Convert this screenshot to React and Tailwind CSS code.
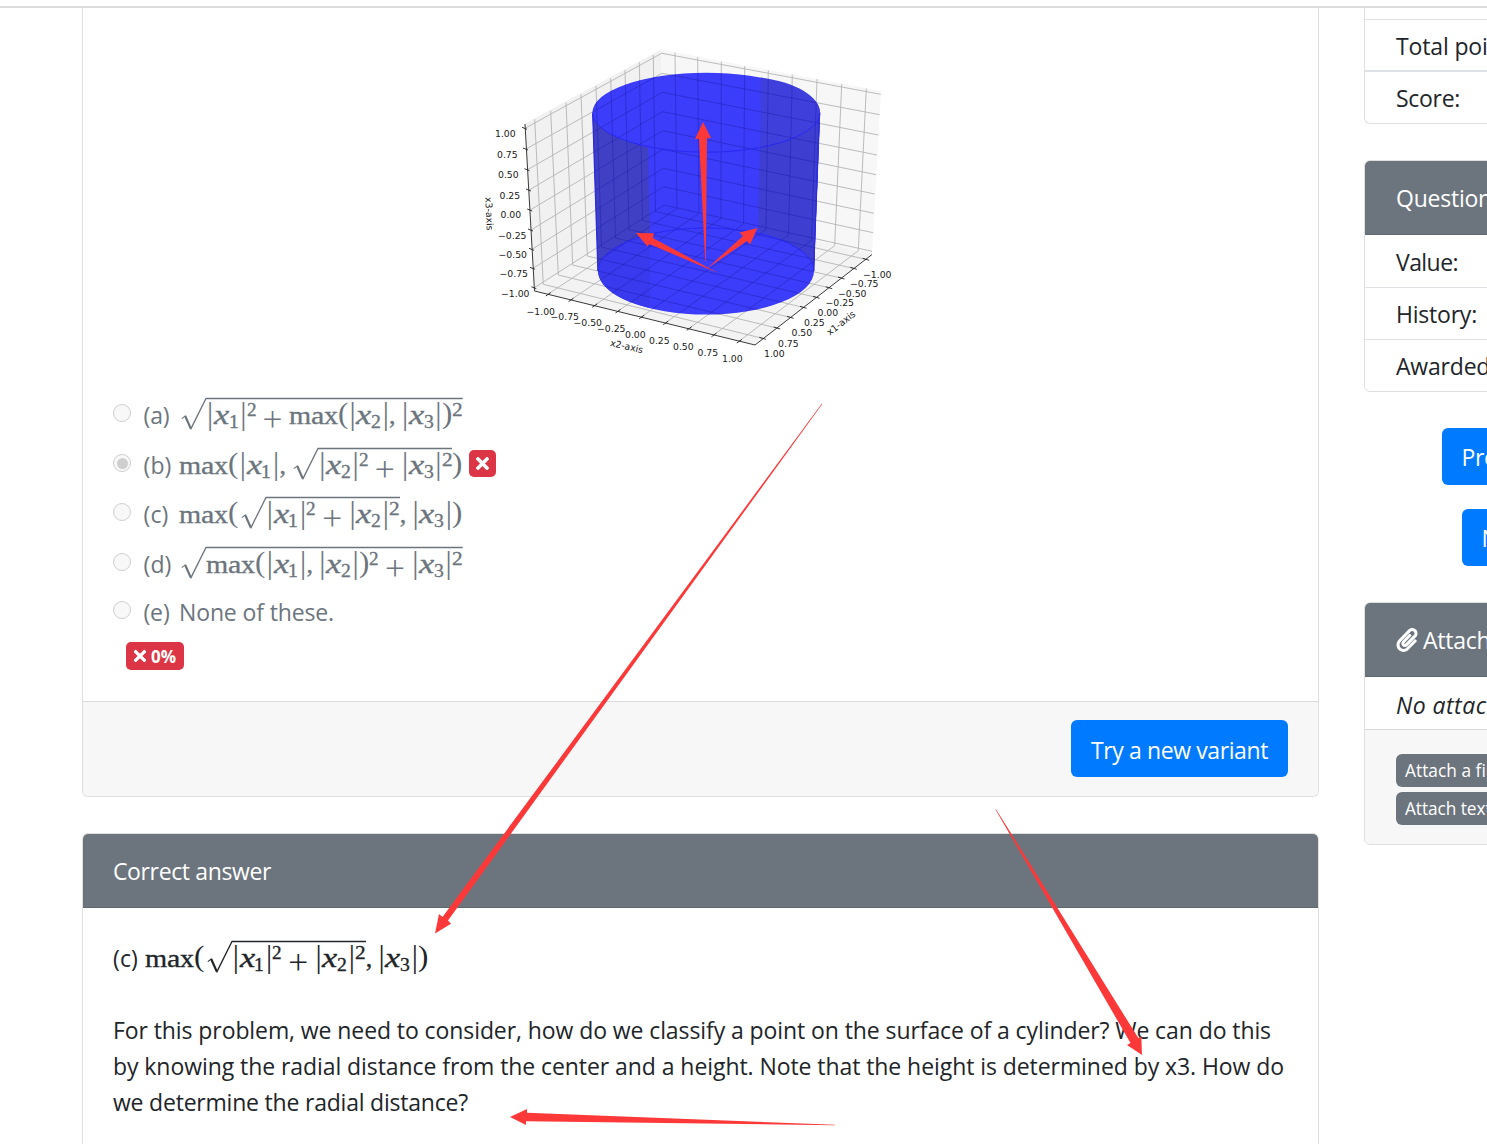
import React, { useLayoutEffect, useRef } from "react";
import { FaPaperclip, FaTimes } from "react-icons/fa";

// Text tracked so that it fills exactly `w` pixels.
function Fit({ w, children, className = "" }) {
  const ref = useRef(null);
  useLayoutEffect(() => {
    const el = ref.current;
    el.style.letterSpacing = "0px";
    const natural = el.getBoundingClientRect().width;
    el.style.letterSpacing = (w - natural) / children.length + "px";
  }, [w, children]);
  return (
    <span ref={ref} className={"inline-block whitespace-nowrap " + className}>
      {children}
    </span>
  );
}

/* ---------- formulas ---------- */

const EM = 26.6;
// kind: [advance in em, natural advance of the glyph in its font, font px, classes]
const BOLDER = "[-webkit-text-stroke:0.35px_currentColor]";
const GLYPHS = {
  m: [0.833, 0.778, 26, BOLDER],
  a: [0.5, 0.444, 26, BOLDER],
  x: [0.528, 0.5, 26, BOLDER],
  "(": [0.389, 0.333, 29, "-top-px"],
  ")": [0.389, 0.333, 29, "-top-px"],
  "|": [0.278, 0.2, 31, "left-px"],
  ",": [0.445, 0.25, 26, BOLDER],
};

function Glyph({ t, adv, nat, size, cls, stretch = true }) {
  const w = adv * EM;
  return (
    <span className={"relative inline-block leading-none " + cls} style={{ width: w, fontSize: size }}>
      <span
        className="inline-block origin-left"
        style={{ transform: stretch ? `scaleX(${w / (nat * size)})` : undefined }}
      >
        {t}
      </span>
    </span>
  );
}

function widthOf(tokens) {
  return tokens.reduce((sum, t) => {
    if (t === "X") return sum + 0.572;
    if (t[0] === "_") return sum + 0.4;
    if (t[0] === "^") return sum + (t[2] ? 0.4 : 0.36);
    if (t === "+") return sum + 1.222;
    return sum + GLYPHS[t][0];
  }, 0) * EM;
}

function Tokens({ list }) {
  return list.map((t, i) => {
    if (t === "X") return <Glyph key={i} t="x" adv={0.572} nat={0.444} size={27} cls={"italic left-[0.5px] " + BOLDER} />;
    if (t[0] === "_")
      return <Glyph key={i} t={t[1]} adv={0.4} nat={0.54} size={19} cls={"top-[4px] " + BOLDER} />;
    if (t[0] === "^")
      return <Glyph key={i} t={t[1]} adv={t[2] ? 0.4 : 0.36} nat={0.5} size={19} cls={"-top-[8px] " + BOLDER} />;
    if (t === "+")
      return (
        <span
          key={i}
          className="relative top-[5.5px] flex justify-center font-['Inter'] text-[38px] font-extralight leading-[20px]"
          style={{ width: 1.222 * EM }}
        >
          +
        </span>
      );
    const [adv, nat, size, cls] = GLYPHS[t];
    return <Glyph key={i} t={t} adv={adv} nat={nat} size={size} cls={cls} stretch={t !== "," && t !== "|"} />;
  });
}

function Sqrt({ list }) {
  const end = 27 + widthOf(list);
  return (
    <span className="inline-flex items-baseline">
      <svg width="27" height="26" className="shrink-0 overflow-visible" fill="none" stroke="currentColor">
        <path d="M2.8 20.6L6.6 17.6" strokeWidth="1.1" />
        <path d="M6.2 18L11.8 30.6" strokeWidth="2.2" />
        <path d={`M11.6 31.4L27 0.5H${end}`} strokeWidth="1.3" />
      </svg>
      <Tokens list={list} />
    </span>
  );
}

const ABS = (n) => ["|", "X", "_" + n, "|"];
const MAX = ["m", "a", "x", "("];

function Formula({ parts }) {
  return (
    <span className="inline-flex items-baseline font-['Liberation_Serif',serif]">
      {parts.map((p, i) => (p.sqrt ? <Sqrt key={i} list={p.sqrt} /> : <Tokens key={i} list={p} />))}
    </span>
  );
}

const F_A = [{ sqrt: [...ABS(1), "^2", "+", ...MAX, ...ABS(2), ",", ...ABS(3), ")", "^2e"] }];
const F_B = [[...MAX, ...ABS(1), ","], { sqrt: [...ABS(2), "^2", "+", ...ABS(3), "^2e"] }, [")"]];
const F_C = [[...MAX], { sqrt: [...ABS(1), "^2", "+", ...ABS(2), "^2e"] }, [",", ...ABS(3), ")"]];
const F_D = [{ sqrt: [...MAX, ...ABS(1), ",", ...ABS(2), ")", "^2", "+", ...ABS(3), "^2e"] }];

function Option({ label, lw, checked, h, children }) {
  return (
    <div className={"flex items-start " + h}>
      <span className="ml-[30px] mt-[7px] flex size-[18px] items-center justify-center rounded-full border-[1.5px] border-[#cfcfcf] bg-[#f8f8f8]">
        {checked && <span className="size-[11px] rounded-full bg-[#cfcfcf]" />}
      </span>
      <div className="ml-[12.5px] flex items-baseline text-[23px] leading-[36px] text-[#6c757d]">
        <span className="w-[35.5px]">
          <Fit w={lw}>{label}</Fit>
        </span>
        {children}
      </div>
    </div>
  );
}

/* ---------- 3D plot ---------- */

const Z_LEFT = [[525, 128.3], [526, 149], [527.5, 169.7], [529, 190], [530.2, 210], [531, 230], [532, 249.3], [533, 268.3], [534.3, 287.7]];
const Z_BACK = [[661.7, 53.3], [662, 73.3], [662.2, 92.3], [662.5, 111.7], [662.8, 130.7], [663, 149.3], [663.3, 168.3], [663.6, 186.7], [664, 205]];
const Z_RIGHT = [[880.7, 94.3], [879.7, 114.7], [878.3, 135], [877, 155], [876, 174.7], [874.7, 194], [874, 213.3], [873, 232.7], [872, 251.3]];
const L_TOP = [[534.7, 119.3], [550.7, 110.7], [566, 102.3], [581, 94.3], [596, 86], [610.7, 78.3], [625, 70], [639.3, 62.3], [653.3, 55]];
const L_BOT = [[543.3, 284.3], [558.3, 275], [572.7, 265], [587.3, 256], [601.5, 247], [615.5, 238], [629, 229.5], [642.5, 220.5], [655.5, 211.5]];
const R_TOP = [[675, 52.7], [697.7, 57.3], [721.3, 61.7], [744.7, 66], [768.3, 70.3], [792.3, 74.7], [817, 79], [841.7, 84], [866.3, 88.7]];
const R_BOT = [[677, 208.5], [699, 213.5], [721, 218.5], [743.5, 224], [766, 229.5], [788.5, 235], [811.5, 240.3], [834.7, 245.7], [858.3, 250.7]];
const X1_TICK = [[762.3, 338.3], [776.7, 328], [790, 317.3], [803, 307.3], [816, 297.3], [828.7, 287.7], [841, 278], [853.3, 268.3], [865.7, 259.3]];
const X2_TICK = [[548.3, 294], [571, 299.7], [594.7, 305.3], [618, 311], [641.7, 316.7], [665.7, 322.7], [689.2, 328.3], [714, 334.7], [739.3, 341]];

const seg = (...pts) => "M" + pts.map((p) => p.join(" ")).join("L");
const GRID = [
  ...Z_LEFT.map((p, i) => seg(p, Z_BACK[i], Z_RIGHT[i])),
  ...L_TOP.map((p, i) => seg(p, L_BOT[i], X1_TICK[i])),
  ...R_TOP.map((p, i) => seg(p, R_BOT[i], X2_TICK[i])),
].join("");
const TICKS = [
  ...Z_LEFT.map(([x, y]) => seg([x - 3, y - 1], [x + 2, y + 1])),
  ...X1_TICK.map(([x, y]) => seg([x - 3, y - 1], [x + 3.5, y + 1])),
  ...X2_TICK.map(([x, y]) => seg([x - 2.5, y + 2], [x + 2.5, y - 1.5])),
].join("");

const LABELS = [
  ["1.00", 495, 137.5], ["0.75", 497, 158.5], ["0.50", 498, 179], ["0.25", 499.5, 199.5], ["0.00", 500.5, 219],
  ["−0.25", 498, 239.5], ["−0.50", 498.5, 259], ["−0.75", 499.5, 278], ["−1.00", 501, 297.5],
  ["−1.00", 526.5, 315.5], ["−0.75", 550.5, 321], ["−0.50", 573.5, 327], ["−0.25", 597, 333], ["0.00", 625, 338.5],
  ["0.25", 649, 345], ["0.50", 673, 350.5], ["0.75", 697.5, 356.5], ["1.00", 722, 363],
  ["−1.00", 863, 278.8], ["−0.75", 850, 288], ["−0.50", 838, 297.2], ["−0.25", 825.5, 307], ["0.00", 817.5, 317],
  ["0.25", 804, 327], ["0.50", 791.5, 337], ["0.75", 778, 347.5], ["1.00", 764, 358],
];

const BODY = "M592.5 112.5A113.75 39.7 0 0 1 820 112.5L814 271A108 43.5 0 0 1 598 271Z";

function Plot() {
  return (
    <svg viewBox="480 40 420 330" width="420" height="330" className="ml-[397px] mt-[32px] block" fontFamily="DejaVu Sans" fontSize="9.3" fill="#1a1a1a">
      <path d="M525 123.5L661.3 49.5L664 203L534.5 291Z" fill="#f1f1f1" />
      <path d="M661.3 49.5L881 91L872 254L664 203Z" fill="#f7f7f7" />
      <path d="M534.5 291L664 203L872 254L755 345Z" fill="#f3f3f3" />
      <path d={GRID} stroke="#b4b4b4" strokeWidth="0.9" fill="none" />
      <path d={BODY} fill="#3c3cfb" />
      <path d="M592.5 112.5C593 128 617 140 648 147L650 234C620 242 599 254 598 271Z" fill="#4040c4" />
      <path d="M598 271C599 254 620 242 650 234L650 308C620 301 599 288 598 271Z" fill="#3939ee" />
      <path d="M761 77.5C795 82 820 96 820 112.5L814 271C813 253 790 240 759 232Z" fill="#3f3fdc" />
      <path d="M760 147C795 141 819 128 820 112.5L814 271C813 253 790 240 758 232Z" fill="#3e3ed0" />
      <clipPath id="cylinder">
        <path d={BODY} />
      </clipPath>
      <path d={GRID} stroke="#2020a8" strokeOpacity="0.45" strokeWidth="1" fill="none" clipPath="url(#cylinder)" />
      <path d="M592.5 112.5A113.75 39.7 0 0 0 820 112.5M598 271A108 43 0 0 1 814 271" stroke="#2929f0" strokeWidth="1" fill="none" />
      <path d="M592.8 114L598 271M819.5 114L813.5 271" stroke="#2c2cdd" strokeWidth="1.4" fill="none" />
      <path d="M525 124L534.5 291L755 345L872 254.5" stroke="#222" strokeWidth="0.9" fill="none" />
      <path d={TICKS} stroke="#222" strokeWidth="0.9" fill="none" />
      {LABELS.map(([t, x, y], i) => (
        <text key={i} x={x} y={y - 0.6}>{t}</text>
      ))}
      <g textAnchor="middle">
        <text transform="translate(486 214) rotate(87)">x3-axis</text>
        <text transform="translate(626 349.5) rotate(13)">x2-axis</text>
        <text transform="translate(843 325.5) rotate(-38)">x1-axis</text>
      </g>
    </svg>
  );
}

function Arrows() {
  return (
    <svg width="1487" height="1144" className="pointer-events-none absolute left-0 top-0" fill="#fd3838">
      <path d="M822.3 404L821.7 403.7L442.5 917L439 914L435 933.5L451 923.7L448 920.5Z" />
      <path d="M996 809.2L995.5 809.6L1130.5 1043L1127 1045L1142 1055L1141.3 1036.3L1138.5 1038.3Z" />
      <path d="M835 1124.7V1125.3L526 1121.2V1125L510 1117L527 1109V1112.8Z" />
      <path d="M705.2 261H705.8L707 138.3L711 138L703 122L695 139L699 138.7Z" />
      <path d="M718 273L649.3 244L647.5 246.5L636 233L654 233.3L652.8 238Z" />
      <path d="M707 268.5L743 236L739.5 232.5L757.5 228L750 244.5L747 241Z" />
    </svg>
  );
}

/* ---------- page ---------- */

const Badge = ({ className, children }) => (
  <span className={"flex items-center rounded-[5px] bg-[#dc3545] font-bold text-white " + className}>{children}</span>
);

const Row = ({ w, className, children }) => (
  <div className={"pl-[31px] text-[23px] leading-[36px] text-[#212529] " + className}>
    <Fit w={w}>{children}</Fit>
  </div>
);

const HEAD = "border-b border-[#5f6870] bg-[#6c757d] text-[23px] leading-[36px] text-white";

export default function App() {
  return (
    <div className="relative flex h-[1144px] w-[1487px] flex-col overflow-hidden bg-white font-['Open_Sans','Noto_Sans',sans-serif]">
      <div className="mt-[6px] h-[2px] shrink-0 bg-[#dcdcdc]" />
      <div className="flex min-h-0 flex-1">
        <main className="ml-[82px] w-[1237px] shrink-0">
          <section className="flex h-[789px] flex-col overflow-hidden rounded-b-[6px] border border-t-0 border-[#dfdfdf]">
            <Plot />
            <div className="mt-[27px]">
              <Option label="(a)" lw={26} h="h-[50px]">
                <Formula parts={F_A} />
              </Option>
              <Option label="(b)" lw={28} checked h="h-[49px]">
                <Formula parts={F_B} />
                <Badge className="ml-[6px] mt-[3px] size-[27px] justify-center self-start">
                  <FaTimes className="size-[19px]" />
                </Badge>
              </Option>
              <Option label="(c)" lw={25} h="h-[50px]">
                <Formula parts={F_C} />
              </Option>
              <Option label="(d)" lw={28} h="h-[48px]">
                <Formula parts={F_D} />
              </Option>
              <Option label="(e)" lw={26} h="h-[48px]">
                <Fit w={155}>None of these.</Fit>
              </Option>
            </div>
            <Badge className="ml-[43px] h-[28px] w-[58px] shrink-0 gap-[2px] pl-[5px] text-[17px]">
              <FaTimes className="size-[18px]" />
              <Fit w={25} className="pt-px">0%</Fit>
            </Badge>
            <div className="mt-auto flex h-[95px] shrink-0 items-start justify-end border-t border-[#dadada] bg-[#f7f7f7] pr-[30px] pt-[18px]">
              <button className="h-[57px] w-[217px] rounded-[6px] bg-[#007bff] pt-[4px] text-[23px] text-white">
                <Fit w={177}>Try a new variant</Fit>
              </button>
            </div>
          </section>

          <section className="mt-[36px] h-[400px] overflow-hidden rounded-t-[6px] border border-[#dfdfdf]">
            <header className={HEAD + " h-[74px] pl-[30px] pt-[19px]"}>
              <Fit w={158}>Correct answer</Fit>
            </header>
            <div className="pl-[30px] pt-[32px] text-[23px] leading-[36px] text-[#212529]">
              <div className="flex h-[72px] items-baseline">
                <span className="w-[32px]">
                  <Fit w={25}>(c)</Fit>
                </span>
                <Formula parts={F_C} />
              </div>
              <p className="flex flex-col items-start">
                <Fit w={1158}>For this problem, we need to consider, how do we classify a point on the surface of a cylinder? We can do this</Fit>
                <Fit w={1171}>by knowing the radial distance from the center and a height. Note that the height is determined by x3. How do</Fit>
                <Fit w={355}>we determine the radial distance?</Fit>
              </p>
            </div>
          </section>
        </main>

        <aside className="ml-[45px] w-[400px] shrink-0">
          <section className="h-[116px] rounded-b-[6px] border border-t-0 border-[#dfdfdf] pt-[11px]">
            <Row w={130.4} className="h-[51px] border-t border-[#dee2e6] pt-[8px]">Total points:</Row>
            <Row w={64} className="border-t-2 border-[#dee2e6] pt-[8px]">Score:</Row>
          </section>

          <section className="mt-[36px] h-[232px] overflow-hidden rounded-[6px] border border-[#dfdfdf]">
            <header className={HEAD + " h-[74px] pl-[31px] pt-[19px]"}>
              <Fit w={96}>Question</Fit>
            </header>
            <Row w={62} className="h-[52px] pt-[9px]">Value:</Row>
            <Row w={81} className="h-[52px] border-t border-[#dee2e6] pt-[8px]">History:</Row>
            <Row w={171.7} className="h-[52px] border-t border-[#dee2e6] pt-[8px]">Awarded points:</Row>
          </section>

          <button className="ml-[78px] mt-[36px] block h-[57px] w-[226px] rounded-[6px] bg-[#007bff] pt-[2px] text-[23px] text-white">
            <Fit w={187}>Previous question</Fit>
          </button>
          <button className="ml-[98px] mt-[24px] block h-[57px] w-[186px] rounded-[6px] bg-[#007bff] pt-[2px] text-[23px] text-white">
            <Fit w={147}>Next question</Fit>
          </button>

          <section className="mt-[36px] h-[243px] overflow-hidden rounded-[6px] border border-[#dfdfdf]">
            <header className={HEAD + " flex h-[74px] pl-[31px] pt-[19px]"}>
              <FaPaperclip className="mr-[5px] mt-[6px] h-[24px] w-[22px]" />
              <Fit w={133.7}>Attachments</Fit>
            </header>
            <Row w={179} className="h-[52px] pt-[10px] italic">No attached files</Row>
            <div className="flex h-[120px] flex-col items-start gap-[5px] border-t border-[#dadada] bg-[#f7f7f7] pl-[31px] pt-[24px] text-[17.3px] leading-[33px] text-white">
              <span className="h-[33px] rounded-[6px] bg-[#6c757d] px-[9px]">
                <Fit w={95}>Attach a file</Fit>
              </span>
              <span className="h-[33px] rounded-[6px] bg-[#6c757d] px-[9px]">
                <Fit w={86.5}>Attach text</Fit>
              </span>
            </div>
          </section>
        </aside>
      </div>
      <Arrows />
    </div>
  );
}
